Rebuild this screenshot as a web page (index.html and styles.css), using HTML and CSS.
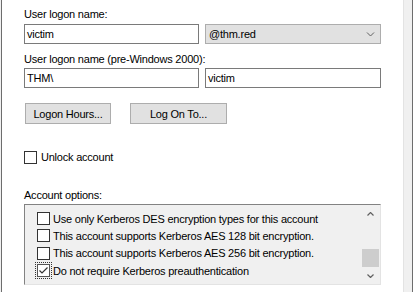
FILE: index.html
```html
<!DOCTYPE html>
<html lang="en">
<head>
  <meta charset="UTF-8" />
  <title>Account</title>
  <link rel="stylesheet" href="styles.css">
</head>
<body>
  <div class="frame">
    <div class="edge-left"></div>

    <div class="panel">
      <div class="field-label first">User logon name:</div>
      <div class="field-row">
        <div class="text-box">victim</div>
        <div class="combo-box">
          <span>@thm.red</span>
          <svg class="chevron" width="9" height="5" viewBox="0 0 9 5"><path d="M1 0.5 L4.5 4 L8 0.5" fill="none" stroke="#606060" stroke-width="1"/></svg>
        </div>
      </div>

      <div class="field-label second">User logon name (pre-Windows 2000):</div>
      <div class="field-row">
        <div class="text-box">THM\</div>
        <div class="text-box">victim</div>
      </div>

      <div class="button-row">
        <button class="win-button hours-button">Logon Hours...</button>
        <button class="win-button logon-button">Log On To...</button>
      </div>

      <label class="unlock-row">
        <span class="check-box"></span>
        <span>Unlock account</span>
      </label>

      <div class="field-label options-label">Account options:</div>
      <div class="options-list">
        <div class="options-items">
          <div class="option-item"><span class="check-box"></span><span>Use only Kerberos DES encryption types for this account</span></div>
          <div class="option-item"><span class="check-box"></span><span>This account supports Kerberos AES 128 bit encryption.</span></div>
          <div class="option-item"><span class="check-box"></span><span>This account supports Kerberos AES 256 bit encryption.</span></div>
          <div class="option-item"><span class="check-box checked focused">
            <svg width="11" height="11" viewBox="0 0 11 11"><path d="M1.5 5.5 L4 8 L9.5 2.5" fill="none" stroke="#333" stroke-width="1.2"/></svg>
          </span><span>Do not require Kerberos preauthentication</span></div>
        </div>
        <div class="scroll-bar">
          <div class="scroll-arrow">
            <svg width="7" height="4" viewBox="0 0 7 4"><path d="M0.5 3.5 L3.5 0.5 L6.5 3.5" fill="none" stroke="#606060" stroke-width="1.2"/></svg>
          </div>
          <div class="scroll-track"></div>
          <div class="scroll-thumb"></div>
          <div class="scroll-arrow">
            <svg width="7" height="4" viewBox="0 0 7 4"><path d="M0.5 0.5 L3.5 3.5 L6.5 0.5" fill="none" stroke="#606060" stroke-width="1.2"/></svg>
          </div>
        </div>
      </div>
    </div>

    <div class="edge-right"></div>
  </div>
</body>
</html>
```

FILE: styles.css
```css
body {
  margin: 0;
  background: #fff;
  font-family: "Liberation Sans", Arial, sans-serif;
  font-size: 11px;
  letter-spacing: -0.22px;
  color: #000;
}
.frame {
  display: flex;
  height: 292px;
  width: 413px;
}
.edge-left {
  width: 1px;
  border-right: 1px solid #6d6d6d;
  background: #f0f0f0;
}
.edge-right {
  width: 8px;
  background: #f0f0f0;
  border-left: 1px solid #e3e3e3;
  border-right: 1px solid #6d6d6d;
}
.panel {
  flex: 1;
  padding: 0 0 0 22px;
}
.field-label {
  line-height: 13px;
  height: 13px;
}
.field-label.first {
  margin-top: 8px;
  margin-bottom: 3px;
}
.field-label.second {
  margin-top: 9px;
  margin-bottom: 2px;
}
.field-row {
  display: grid;
  grid-template-columns: 175px 176px;
  gap: 6px;
}
.text-box {
  height: 18px;
  line-height: 18px;
  border: 1px solid #7a7a7a;
  background: #fff;
  padding: 0 2px;
}
.combo-box {
  height: 18px;
  line-height: 18px;
  border: 1px solid #adadad;
  background: #e1e1e1;
  padding: 0 3px;
  display: flex;
  justify-content: space-between;
  align-items: center;
}
.chevron {
  margin-right: 2px;
}
.button-row {
  display: flex;
  gap: 19px;
  margin-top: 15px;
  padding-left: 1px;
}
.win-button {
  height: 21px;
  border: 1px solid #adadad;
  background: #e1e1e1;
  font-family: inherit;
  font-size: 11px;
  letter-spacing: inherit;
  color: #000;
  padding: 0;
}
.hours-button {
  width: 86px;
}
.logon-button {
  width: 97px;
}
.unlock-row {
  display: flex;
  align-items: center;
  gap: 4px;
  margin-top: 26px;
  height: 14px;
}
.check-box {
  width: 11px;
  height: 11px;
  border: 1px solid #333;
  background: #fff;
  display: inline-flex;
  align-items: center;
  justify-content: center;
  flex: none;
}
.check-box.checked {
  border-color: #555;
}
.check-box.focused {
  outline: 1px dotted #333;
  outline-offset: 1px;
}
.options-label {
  margin-top: 25px;
  margin-bottom: 2px;
}
.options-list {
  width: 355px;
  height: 79px;
  border-top: 1px solid #828282;
  border-left: 1px solid #828282;
  border-right: 1px solid #e3e3e3;
  border-bottom: 1px solid #e3e3e3;
  background: #f0f0f0;
  display: flex;
}
.options-items {
  flex: 1;
  padding: 5px 0 0 12px;
}
.option-item {
  display: flex;
  align-items: center;
  gap: 3px;
  height: 17.3px;
}
.scroll-bar {
  width: 17px;
  margin-right: 1px;
  display: flex;
  flex-direction: column;
}
.scroll-arrow {
  height: 17px;
  display: flex;
  align-items: center;
  justify-content: center;
}
.scroll-track {
  flex: 1;
}
.scroll-thumb {
  height: 18px;
  background: #cdcdcd;
}
```
